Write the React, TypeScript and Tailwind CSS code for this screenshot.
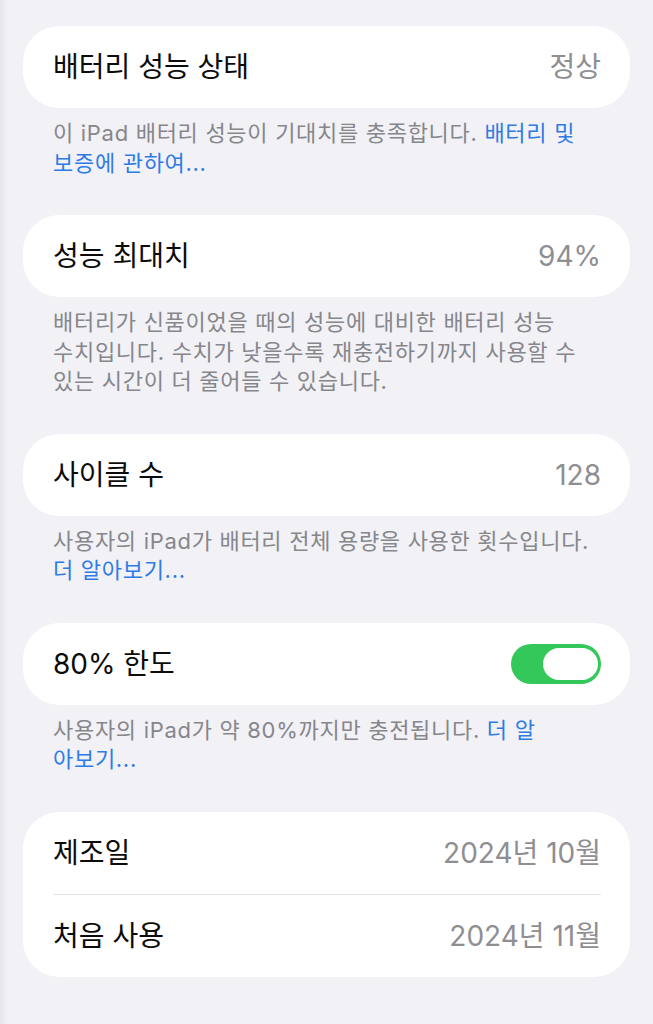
import React from "react";

const font = { fontFamily: '"Inter", "Noto Sans CJK KR", "Noto Sans", sans-serif' };

function Row({ label, value, children }: { label: string; value?: string; children?: React.ReactNode }) {
  return (
    <div className="flex h-[82px] items-center justify-between pl-[30px] pr-[29px]">
      <span className="text-[28px] leading-none text-[#0b0b0c]">{label}</span>
      {value ? <span className="text-[28px] leading-none text-[#8e8e93]">{value}</span> : children}
    </div>
  );
}

function Card({ children }: { children: React.ReactNode }) {
  return <div className="mx-[23px] rounded-[36px] bg-white">{children}</div>;
}

function Footer({ children, last }: { children: React.ReactNode; last?: boolean }) {
  return (
    <div
      className={`mx-[23px] mt-[11px] pl-[30px] pr-[4px] text-[22px] leading-[29.5px] tracking-[0.7px] text-[#86868b] ${last ? "" : "mb-[37px]"}`}
    >
      {children}
    </div>
  );
}

const Link = ({ children }: { children: React.ReactNode }) => (
  <span className="text-[#2f7be6]">{children}</span>
);

function Toggle() {
  return (
    <div className="flex h-[40px] w-[90px] items-center justify-end rounded-full bg-[#34c759] pr-[3px]">
      <div className="h-[32px] w-[55px] rounded-full bg-white" />
    </div>
  );
}

export default function App() {
  return (
    <div className="flex min-h-[1024px] w-[653px] bg-[#f1f1f6]" style={font}>
      <div className="w-[7px] shrink-0 bg-gradient-to-r from-[#e4e4ea] to-[#f1f1f6]" />
      <div className="flex-1 -ml-[7px] pt-[26px]">
        <Card>
          <Row label="배터리 성능 상태" value="정상" />
        </Card>
        <Footer>
          <div className="whitespace-nowrap">
            이 iPad 배터리 성능이 기대치를 충족합니다. <Link>배터리 및</Link>
          </div>
          <div>
            <Link>보증에 관하여...</Link>
          </div>
        </Footer>

        <Card>
          <Row label="성능 최대치" value="94%" />
        </Card>
        <Footer>
          <div className="whitespace-nowrap">배터리가 신품이었을 때의 성능에 대비한 배터리 성능</div>
          <div className="whitespace-nowrap">수치입니다. 수치가 낮을수록 재충전하기까지 사용할 수</div>
          <div className="whitespace-nowrap">있는 시간이 더 줄어들 수 있습니다.</div>
        </Footer>

        <Card>
          <Row label="사이클 수" value="128" />
        </Card>
        <Footer>
          <div className="whitespace-nowrap">사용자의 iPad가 배터리 전체 용량을 사용한 횟수입니다.</div>
          <div>
            <Link>더 알아보기...</Link>
          </div>
        </Footer>

        <Card>
          <Row label="80% 한도">
            <Toggle />
          </Row>
        </Card>
        <Footer>
          <div className="whitespace-nowrap">
            사용자의 iPad가 약 80%까지만 충전됩니다. <Link>더 알</Link>
          </div>
          <div>
            <Link>아보기...</Link>
          </div>
        </Footer>

        <Card>
          <Row label="제조일" value="2024년 10월" />
          <div className="ml-[30px] mr-[29px] h-px bg-[#e3e3e8]" />
          <Row label="처음 사용" value="2024년 11월" />
        </Card>
      </div>
    </div>
  );
}
